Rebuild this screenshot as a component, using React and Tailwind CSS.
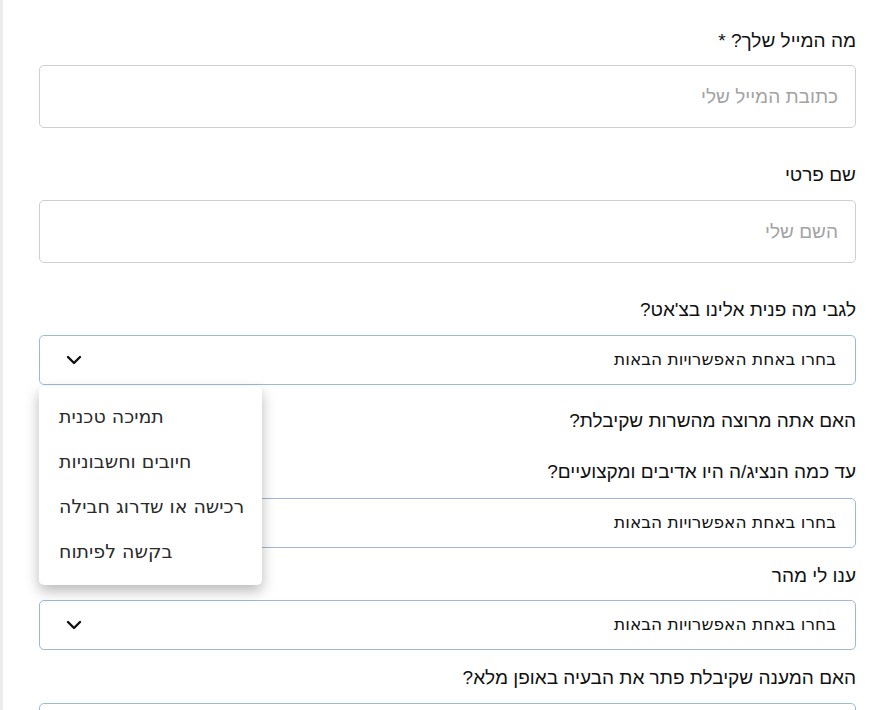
import React from 'react';

const Chevron = () => (
  <svg width="16" height="10" viewBox="0 0 16 10" fill="none" className="block">
    <path d="M2 2l6 6 6-6" stroke="#111" strokeWidth="2.4" strokeLinecap="round" strokeLinejoin="round" />
  </svg>
);

const options = ['תמיכה טכנית', 'חיובים וחשבוניות', 'רכישה או שדרוג חבילה', 'בקשה לפיתוח'];

const Label = ({ children, className = '' }) => (
  <div className={`text-[19px] leading-[24px] text-[#111] text-right ${className}`}>{children}</div>
);

const TextInput = ({ placeholder }) => (
  <input
    type="text"
    placeholder={placeholder}
    className="block w-full h-[63px] rounded-[5px] border border-[#cfcfcf] bg-white px-[17px] text-[19px] text-right placeholder-[#a3a3a3] outline-none"
  />
);

const Select = ({ open }) => (
  <div className="relative">
    <div className="flex h-[50px] items-center justify-between rounded-[5px] border border-[#9fb9d3] bg-white pr-[19px] pl-[26px]">
      <span className="text-[17px] text-[#111] font-['DejaVu_Sans',sans-serif]">בחרו באחת האפשרויות הבאות</span>
      <Chevron />
    </div>
    {open && (
      <div className="absolute left-0 top-full z-10 mt-[1px] w-[223px] rounded-[5px] bg-white pt-2 pb-[11px] shadow-[0_6px_14px_rgba(0,0,0,0.28)]">
        {options.map((o) => (
          <div key={o} className="flex h-[45px] items-center pl-5 text-[19px] text-[#2a2a2a] font-['DejaVu_Sans',sans-serif]">
            <span className="w-full whitespace-nowrap text-left">{o}</span>
          </div>
        ))}
      </div>
    )}
  </div>
);

export default function App() {
  return (
    <div className="flex h-[710px] w-[891px] overflow-hidden bg-white font-['Liberation_Sans',Arial,sans-serif]">
      <div className="w-[3px] shrink-0 bg-[#ececec]" />
      <div dir="rtl" className="flex-1 pl-[36px] pr-[35px] pt-[29px]">
        <Label>מה המייל שלך? *</Label>
        <div className="mt-[12px]">
          <TextInput placeholder="כתובת המייל שלי" />
        </div>

        <Label className="mt-[35px]">שם פרטי</Label>
        <div className="mt-[13px]">
          <TextInput placeholder="השם שלי" />
        </div>

        <Label className="mt-[35px]">לגבי מה פנית אלינו בצ'אט?</Label>
        <div className="mt-[13px]">
          <Select open />
        </div>

        <Label className="mt-[24px]">האם אתה מרוצה מהשרות שקיבלת?</Label>

        <Label className="mt-[27px]">עד כמה הנציג/ה היו אדיבים ומקצועיים?</Label>
        <div className="mt-[14px]">
          <Select />
        </div>

        <Label className="mt-[16px]">ענו לי מהר</Label>
        <div className="mt-[12px]">
          <Select />
        </div>

        <Label className="mt-[16px]">האם המענה שקיבלת פתר את הבעיה באופן מלא?</Label>
        <div className="mt-[13px]">
          <Select />
        </div>
      </div>
    </div>
  );
}
